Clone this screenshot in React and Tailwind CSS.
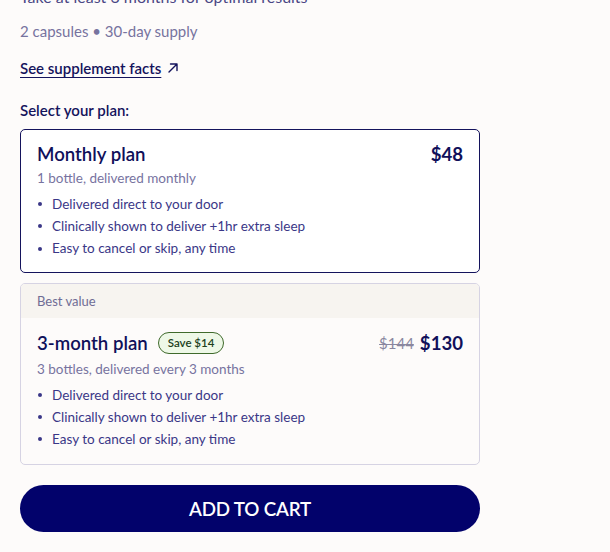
import React, { useState } from 'react';

const perks = [
  'Delivered direct to your door',
  'Clinically shown to deliver +1hr extra sleep',
  'Easy to cancel or skip, any time',
];

const PerkList = () => (
  <ul className="mt-[6px]">
    {perks.map((perk) => (
      <li key={perk} className="flex items-center text-[13.5px] leading-[22.2px] text-[#3a3787]">
        <span className="ml-[1px] mr-[10px] h-[4px] w-[4px] rounded-full bg-[#3a3787]" />
        {perk}
      </li>
    ))}
  </ul>
);

const ArrowUpRight = () => (
  <svg width="12" height="12" viewBox="0 0 12 12" fill="none" className="ml-[6px]">
    <path d="M2 10L10 2M3.5 2H10V8.5" stroke="#14135c" strokeWidth="1.4" strokeLinecap="round" strokeLinejoin="round" />
  </svg>
);

export default function App() {
  const [plan, setPlan] = useState('monthly');

  return (
    <div
      className="min-h-[552px] w-[610px] overflow-hidden bg-[#fdfbfa] px-5"
      style={{ fontFamily: 'Lato, "Noto Sans", sans-serif' }}
    >
      <div className="mt-[-14px] text-[16px] leading-[22px] text-[#4a4785]">
        Take at least 3 months for optimal results
      </div>
      <div className="mt-[12px] text-[15px] leading-[22px] text-[#77739f]">
        2 capsules • 30-day supply
      </div>
      <a href="#" className="mt-[15px] flex items-center text-[15px] leading-[22px] font-semibold text-[#14135c]">
        <span className="underline decoration-[1px] underline-offset-[3px]">See supplement facts</span>
        <ArrowUpRight />
      </a>
      <div className="mt-[20px] text-[15px] leading-[22px] font-semibold text-[#14135c]">Select your plan:</div>

      <div className="mt-[8px] flex w-[460px] flex-col gap-[10px]">
        <button
          onClick={() => setPlan('monthly')}
          className={`rounded-[5px] bg-white px-4 pt-[11px] pb-[12px] text-left ${
            plan === 'monthly' ? 'border-[1.5px] border-[#14135c]' : 'border border-[#d6d3e3]'
          }`}
        >
          <div className="flex items-center justify-between text-[18.6px] leading-[26px] text-[#10105a]">
            <span className="font-semibold">Monthly plan</span>
            <span className="font-bold">$48</span>
          </div>
          <div className="mt-[2px] text-[13.5px] leading-[18px] text-[#77739f]">1 bottle, delivered monthly</div>
          <PerkList />
        </button>

        <button
          onClick={() => setPlan('quarterly')}
          className={`overflow-hidden rounded-[5px] bg-[#fdfbfa] text-left ${
            plan === 'quarterly' ? 'border-[1.5px] border-[#14135c]' : 'border border-[#d6d3e3]'
          }`}
        >
          <div className="h-[34px] bg-[#f7f4f0] px-4 text-[13px] leading-[34px] text-[#6f6c95]">Best value</div>
          <div className="px-4 pt-[12px] pb-[14px]">
            <div className="flex items-center justify-between text-[18.6px] leading-[26px] text-[#10105a]">
              <div className="flex items-center">
                <span className="font-semibold">3-month plan</span>
                <span className="ml-[10px] flex h-[22px] items-center rounded-full border border-[#3f6a2b] bg-[#eef8e7] px-[9px] text-[11.5px] font-semibold text-[#20401a]">
                  Save $14
                </span>
              </div>
              <div className="flex items-center">
                <span className="mr-[6px] text-[15px] text-[#8a879f] line-through decoration-[1px]">$144</span>
                <span className="font-bold">$130</span>
              </div>
            </div>
            <div className="mt-[4px] text-[13.5px] leading-[18px] text-[#77739f]">3 bottles, delivered every 3 months</div>
            <PerkList />
          </div>
        </button>
      </div>

      <button className="mt-[20px] flex h-[47px] w-[460px] items-center justify-center rounded-full bg-[#02026b] text-[18.8px] font-semibold tracking-[-0.2px] text-white">
        ADD TO CART
      </button>
    </div>
  );
}
